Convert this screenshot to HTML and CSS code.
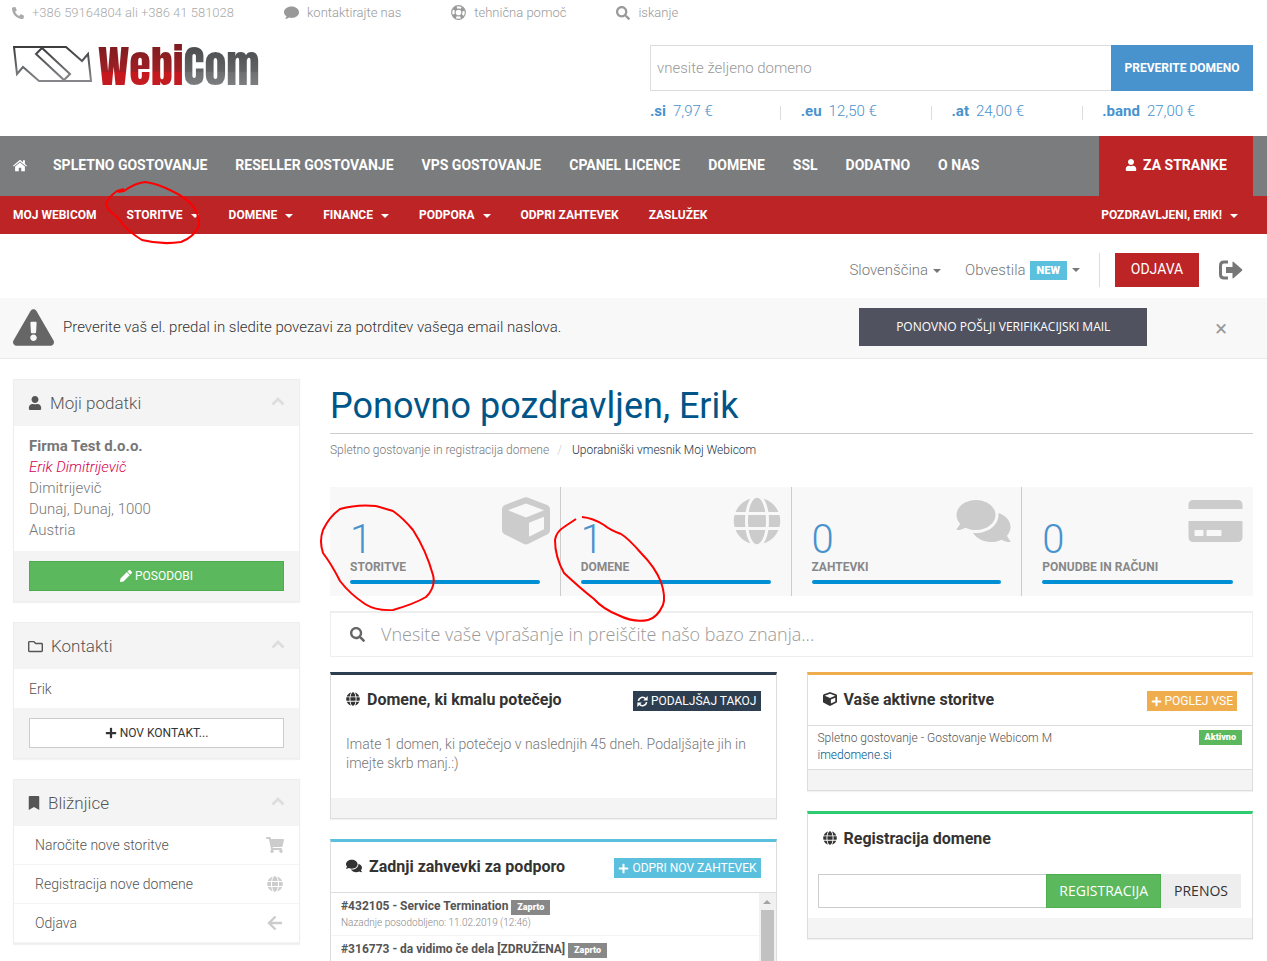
FILE: index.html
```html
<!DOCTYPE html>
<html lang="sl">
<head>
  <meta charset="UTF-8">
  <meta name="viewport" content="width=device-width, initial-scale=1.0">
  <title>Uporabniški vmesnik Moj Webicom</title>
  <link rel="stylesheet" href="styles.css">
</head>
<body>
  <!-- Icon sprite -->
  <svg class="sprite" aria-hidden="true">
    <symbol id="i-phone" viewBox="0 0 512 512"><path d="M18.600 25.300l104-24c11.300-2.600 22.900 3.300 27.500 13.900l48 112c4.200 9.800 1.400 21.300-6.900 28l-60.600 49.600c36 76.700 98.900 140.500 177.200 177.200l49.600-60.600c6.800-8.300 18.200-11.100 28-6.900l112 48c10.700 4.600 16.500 16.100 13.900 27.500l-24 104c-2.500 10.800-12.100 18.600-23.400 18.600C207.900 512.600 0 305.100 0 48.700 0 37.500 7.700 27.800 18.600 25.300z"/></symbol>
    <symbol id="i-comment" viewBox="0 0 512 512"><path d="M256 50C114.600 50 0 136 0 245c0 58 34 108 84 142-6 36-26 62-56 84 60 2 110-14 146-42 26 7 54 11 82 11 141.400 0 256-86 256-195S397.400 50 256 50z"/></symbol>
    <symbol id="i-ring" viewBox="0 0 16 16"><g fill="none" stroke="currentColor"><circle cx="8" cy="8" r="7.300" stroke-width="1.200"/><circle cx="8" cy="8" r="3.600" stroke-width="1.200"/><circle cx="8" cy="8" r="5.500" stroke-width="3.400" stroke-dasharray="4.320" stroke-dashoffset="2.160" transform="rotate(45 8 8)"/></g></symbol>
    <symbol id="i-search" viewBox="0 0 512 512"><path d="M505 442.700L405.300 343c-4.500-4.500-10.600-7-17-7H372c27.600-35.300 44-79.700 44-128C416 93.100 322.900 0 208 0S0 93.100 0 208s93.100 208 208 208c48.300 0 92.700-16.400 128-44v16.300c0 6.400 2.500 12.500 7 17l99.700 99.700c9.400 9.400 24.600 9.400 33.900 0l28.300-28.300c9.400-9.400 9.400-24.600.1-34zM208 336c-70.700 0-128-57.200-128-128 0-70.700 57.200-128 128-128 70.700 0 128 57.200 128 128 0 70.700-57.200 128-128 128z"/></symbol>
    <symbol id="i-home" viewBox="0 0 16 14"><path d="M8 1L0 7.800l.9 1L8 2.900l7.100 5.900.9-1-2.400-2V1.500h-2.200v2.400z"/><path d="M8 4.100L2.400 8.700V14h4.200v-4h2.800v4h4.200V8.700z"/></symbol>
    <symbol id="i-user" viewBox="0 0 448 512"><path d="M224 256c70.700 0 128-57.300 128-128S294.700 0 224 0 96 57.300 96 128s57.300 128 128 128zm89.600 32h-16.700c-22.200 10.200-46.900 16-72.900 16s-50.600-5.800-72.900-16h-16.700C60.200 288 0 348.200 0 422.400V464c0 26.500 21.500 48 48 48h352c26.500 0 48-21.500 48-48v-41.600c0-74.200-60.200-134.400-134.400-134.400z"/></symbol>
    <symbol id="i-signout" viewBox="0 0 24 20"><path d="M9 2H5Q1.500 2 1.500 5.500v9Q1.500 18 5 18h4" fill="none" stroke="currentColor" stroke-width="3"/><path d="M7 7h6.500V2.300Q13.500.8 14.700 1.900L23 9.300q.8.700 0 1.400l-8.300 7.400q-1.200 1.100-1.200-.4V13H7z"/></symbol>
    <symbol id="i-warning" viewBox="0 0 576 512"><path d="M569.517 440.013C587.975 472.007 564.806 512 527.940 512H48.054c-36.937 0-59.999-40.055-41.577-71.987L246.423 23.985c18.467-32.009 64.720-31.951 83.154 0l239.940 416.028zM288 354c-25.405 0-46 20.595-46 46s20.595 46 46 46 46-20.595 46-46-20.595-46-46-46zm-43.673-165.346l7.418 136c.347 6.364 5.609 11.346 11.982 11.346h48.546c6.373 0 11.635-4.982 11.982-11.346l7.418-136c.375-6.874-5.098-12.654-11.982-12.654h-63.383c-6.884 0-12.356 5.780-11.981 12.654z"/></symbol>
    <symbol id="i-chevron" viewBox="0 0 14 9"><path d="M1.500 7.500L7 2l5.500 5.500" fill="none" stroke="currentColor" stroke-width="2.800"/></symbol>
    <symbol id="i-pencil" viewBox="0 0 512 512"><path d="M497.900 142.100l-46.100 46.100c-4.700 4.700-12.300 4.700-17 0l-111-111c-4.700-4.700-4.700-12.300 0-17l46.100-46.100c18.700-18.700 49.100-18.700 67.900 0l60.100 60.100c18.800 18.700 18.800 49.100 0 67.900zM284.200 99.800L21.600 362.400.4 483.900c-2.900 16.400 11.400 30.600 27.800 27.800l121.500-21.300 262.600-262.600c4.700-4.700 4.700-12.300 0-17l-111-111c-4.800-4.700-12.400-4.700-17.100 0z"/></symbol>
    <symbol id="i-folder" viewBox="0 0 512 512"><path d="M464 128H272l-54.630-54.630c-6-6-14.140-9.370-22.630-9.370H48C21.490 64 0 85.490 0 112v288c0 26.510 21.490 48 48 48h416c26.510 0 48-21.490 48-48V176c0-26.510-21.490-48-48-48zm0 272H48V112h140.120l54.630 54.630c6 6 14.140 9.370 22.630 9.370H464v224z"/></symbol>
    <symbol id="i-plus" viewBox="0 0 448 512"><path d="M416 208H272V64c0-17.670-14.330-32-32-32h-32c-17.670 0-32 14.330-32 32v144H32c-17.670 0-32 14.330-32 32v32c0 17.670 14.330 32 32 32h144v144c0 17.670 14.330 32 32 32h32c17.670 0 32-14.330 32-32V304h144c17.670 0 32-14.330 32-32v-32c0-17.670-14.330-32-32-32z"/></symbol>
    <symbol id="i-bookmark" viewBox="0 0 384 512"><path d="M0 512V30C0 12 12 0 30 0h324c18 0 30 12 30 30v482L192 400 0 512z"/></symbol>
    <symbol id="i-cart" viewBox="0 0 576 512"><path d="M528.120 301.319l47.273-208C578.806 78.301 567.391 64 551.990 64H159.208l-9.166-44.810C147.758 8.021 137.930 0 126.529 0H24C10.745 0 0 10.745 0 24v16c0 13.255 10.745 24 24 24h69.883l70.248 343.435C147.325 417.100 136 435.222 136 456c0 30.928 25.072 56 56 56s56-25.072 56-56c0-15.674-6.447-29.835-16.824-40h209.647C430.447 426.165 424 440.326 424 456c0 30.928 25.072 56 56 56s56-25.072 56-56c0-22.172-12.888-41.332-31.579-50.405l5.517-24.276c3.413-15.018-8.002-29.319-23.403-29.319H218.117l-6.545-32h293.145c11.206 0 20.920-7.754 23.403-18.681z"/></symbol>
    <symbol id="i-globe" viewBox="0 0 496 512"><path d="M336.500 160C322 70.700 287.800 8 248 8s-74 62.700-88.500 152h177zM152 256c0 22.200 1.200 43.500 3.300 64h185.300c2.100-20.500 3.300-41.800 3.300-64s-1.200-43.500-3.300-64H155.300c-2.100 20.500-3.300 41.800-3.300 64zm324.700-96c-28.600-67.900-86.500-120.400-158-141.600 24.400 33.800 41.200 84.700 50 141.600h108zM177.200 18.400C105.800 39.600 47.800 92.100 19.300 160h108c8.700-56.900 25.500-107.800 49.900-141.600zM487.400 192H372.700c2.100 21 3.300 42.500 3.300 64s-1.200 43-3.300 64h114.600c5.500-20.500 8.600-41.800 8.600-64s-3.100-43.500-8.500-64zM120 256c0-21.500 1.200-43 3.300-64H8.600C3.200 212.500 0 233.800 0 256s3.200 43.500 8.600 64h114.600c-2-21-3.200-42.500-3.200-64zm39.500 96c14.500 89.300 48.700 152 88.500 152s74-62.700 88.500-152h-177zm159.300 141.600c71.400-21.200 129.400-73.700 158-141.600h-108c-8.800 56.900-25.600 107.800-50 141.600zM19.300 352c28.600 67.900 86.500 120.400 158 141.600-24.400-33.800-41.200-84.700-50-141.600h-108z"/></symbol>
    <symbol id="i-left" viewBox="0 0 16 16"><path d="M8.500 1.500L2 8l6.500 6.500M2.500 8H15" fill="none" stroke="currentColor" stroke-width="2.400"/></symbol>
    <symbol id="i-cube" viewBox="0 0 512 512"><path d="M239.100 6.300l-208 78c-18.700 7-31.100 25-31.100 45v225.100c0 18.200 10.300 34.800 26.500 42.900l208 104c13.500 6.800 29.400 6.800 42.900 0l208-104c16.300-8.100 26.500-24.800 26.500-42.900V129.300c0-20-12.400-37.900-31.100-44.900l-208-78C262 2.200 250 2.200 239.100 6.300zM256 68.400l192 72v1.100l-192 78-192-78v-1.100l192-72zm32 356V275.500l160-65v133.900l-160 80z"/></symbol>
    <symbol id="i-comments" viewBox="0 0 576 512"><path d="M416 192c0-88.400-93.100-160-208-160S0 103.600 0 192c0 34.300 14.100 65.900 38 92-13.400 30.200-35.500 54.200-35.800 54.500-2.200 2.300-2.800 5.700-1.500 8.700S4.800 352 8 352c36.600 0 66.900-12.300 88.700-25 32.200 15.700 70.300 25 111.300 25 114.900 0 208-71.600 208-160zm122 220c23.900-26 38-57.700 38-92 0-66.900-53.500-124.200-129.300-148.100.9 6.600 1.300 13.300 1.300 20.100 0 105.900-107.700 192-240 192-10.800 0-21.300-.8-31.700-1.900C207.800 439.600 281.800 480 368 480c41 0 79.100-9.200 111.300-25 21.800 12.700 52.100 25 88.700 25 3.200 0 6.100-1.900 7.300-4.800 1.300-2.900.7-6.300-1.500-8.700-.3-.3-22.400-24.200-35.800-54.500z"/></symbol>
    <symbol id="i-card" viewBox="0 0 576 512"><path d="M0 432c0 26.500 21.500 48 48 48h480c26.500 0 48-21.500 48-48V256H0v176zm192-68c0-6.600 5.400-12 12-12h136c6.600 0 12 5.400 12 12v40c0 6.600-5.400 12-12 12H204c-6.600 0-12-5.400-12-12v-40zm-128 0c0-6.600 5.400-12 12-12h72c6.600 0 12 5.400 12 12v40c0 6.600-5.400 12-12 12H76c-6.600 0-12-5.400-12-12v-40zM576 80v48H0V80c0-26.500 21.500-48 48-48h480c26.500 0 48 21.500 48 48z"/></symbol>
    <symbol id="i-sync" viewBox="0 0 16 16"><path d="M2 7a6 6 0 0 1 10.500-3M14 9a6 6 0 0 1-10.500 3" fill="none" stroke="currentColor" stroke-width="2.400"/><path d="M15.500 0v6.500H9zM.5 16V9.500H7z"/></symbol>
  </svg>

  <div class="page">
    <div class="container topbar">
      <span class="topbar-item phone"><svg class="icon icon-12"><use href="#i-phone"/></svg>+386 59164804 ali +386 41 581028</span>
      <a href="#" class="topbar-item"><svg class="icon icon-15"><use href="#i-comment"/></svg>kontaktirajte nas</a>
      <a href="#" class="topbar-item"><svg class="icon icon-15"><use href="#i-ring"/></svg>tehnična pomoč</a>
      <a href="#" class="topbar-item"><svg class="icon icon-14"><use href="#i-search"/></svg>iskanje</a>
    </div>

    <header class="container header">
      <a href="#" class="logo">
        <svg class="logo-mark" viewBox="0 0 80 38">
          <defs>
            <linearGradient id="steel" x1="0" y1="0" x2="0" y2="1">
              <stop offset="0" stop-color="#3c3d3f"/>
              <stop offset="1" stop-color="#85878a"/>
            </linearGradient>
          </defs>
          <g fill="none" stroke="url(#steel)" stroke-width="2">
            <path d="M1 2h52l16 14 6-7 3 27H26L10 22l-6 7z"/>
            <path d="M23 9l6-6 28 26-6 6z"/>
          </g>
        </svg>
        <span class="logo-text"><span class="logo-red">Webi</span><span class="logo-grey">Com</span></span>
      </a>
      <div class="domain-check">
        <form class="domain-form">
          <input type="text" placeholder="vnesite željeno domeno" aria-label="Domena">
          <button type="button">PREVERITE DOMENO</button>
        </form>
        <ul class="prices">
          <li><b>.si</b>7,97 €</li>
          <li><b>.eu</b>12,50 €</li>
          <li><b>.at</b>24,00 €</li>
          <li><b>.band</b>27,00 €</li>
        </ul>
      </div>
    </header>

    <nav class="main-nav">
      <div class="container nav-row">
        <a href="#" class="home" aria-label="Domov"><svg class="icon icon-14"><use href="#i-home"/></svg></a>
        <a href="#">SPLETNO GOSTOVANJE</a>
        <a href="#">RESELLER GOSTOVANJE</a>
        <a href="#">VPS GOSTOVANJE</a>
        <a href="#">CPANEL LICENCE</a>
        <a href="#">DOMENE</a>
        <a href="#">SSL</a>
        <a href="#">DODATNO</a>
        <a href="#">O NAS</a>
        <a href="#" class="clients"><svg class="icon icon-12"><use href="#i-user"/></svg>ZA STRANKE</a>
      </div>
    </nav>

    <nav class="sub-nav">
      <div class="container sub-row">
        <a href="#">MOJ WEBICOM</a>
        <a href="#">STORITVE<i class="caret"></i></a>
        <a href="#">DOMENE<i class="caret"></i></a>
        <a href="#">FINANCE<i class="caret"></i></a>
        <a href="#">PODPORA<i class="caret"></i></a>
        <a href="#">ODPRI ZAHTEVEK</a>
        <a href="#">ZASLUŽEK</a>
        <a href="#" class="account">POZDRAVLJENI, ERIK!<i class="caret"></i></a>
      </div>
    </nav>

    <div class="container toolbar">
      <a href="#">Slovenščina<i class="caret"></i></a>
      <a href="#" class="notices">Obvestila<span class="badge-new">NEW</span><i class="caret"></i></a>
      <div class="session">
        <button type="button" class="btn-logout">ODJAVA</button>
        <a href="#" aria-label="Odjava"><svg class="icon signout"><use href="#i-signout"/></svg></a>
      </div>
    </div>

    <div class="verify">
      <div class="container verify-row">
        <svg class="icon verify-icon"><use href="#i-warning"/></svg>
        <p>Preverite vaš el. predal in sledite povezavi za potrditev vašega email naslova.</p>
        <button type="button" class="btn-verify">PONOVNO POŠLJI VERIFIKACIJSKI MAIL</button>
        <button type="button" class="close" aria-label="Zapri">×</button>
      </div>
    </div>

    <div class="container layout">
      <aside class="sidebar">
        <section class="side-panel">
          <h3><svg class="icon icon-14"><use href="#i-user"/></svg>Moji podatki<svg class="icon chevron"><use href="#i-chevron"/></svg></h3>
          <div class="details">
            <strong>Firma Test d.o.o.</strong><br>
            <em>Erik Dimitrijevič</em><br>
            Dimitrijevič<br>
            Dunaj, Dunaj, 1000<br>
            Austria
          </div>
          <div class="side-footer">
            <button type="button" class="btn-side green"><svg class="icon icon-12"><use href="#i-pencil"/></svg>POSODOBI</button>
          </div>
        </section>

        <section class="side-panel">
          <h3><svg class="icon icon-15"><use href="#i-folder"/></svg>Kontakti<svg class="icon chevron"><use href="#i-chevron"/></svg></h3>
          <a href="#" class="contact">Erik</a>
          <div class="side-footer">
            <button type="button" class="btn-side"><svg class="icon icon-12"><use href="#i-plus"/></svg>NOV KONTAKT...</button>
          </div>
        </section>

        <section class="side-panel">
          <h3><svg class="icon bookmark"><use href="#i-bookmark"/></svg>Bližnjice<svg class="icon chevron"><use href="#i-chevron"/></svg></h3>
          <a href="#" class="shortcut">Naročite nove storitve<svg class="icon icon-18"><use href="#i-cart"/></svg></a>
          <a href="#" class="shortcut">Registracija nove domene<svg class="icon icon-18"><use href="#i-globe"/></svg></a>
          <a href="#" class="shortcut">Odjava<svg class="icon icon-18"><use href="#i-left"/></svg></a>
        </section>
      </aside>

      <main class="content">
        <h1>Ponovno pozdravljen, Erik</h1>
        <div class="breadcrumb">
          <a href="#">Spletno gostovanje in registracija domene</a><span>/</span><a href="#" class="current">Uporabniški vmesnik Moj Webicom</a>
        </div>

        <div class="tiles">
          <a href="#" class="tile"><svg class="icon tile-icon cube"><use href="#i-cube"/></svg><span class="stat">1</span><span class="stat-title">STORITVE</span><span class="bar"></span></a>
          <a href="#" class="tile"><svg class="icon tile-icon cube"><use href="#i-globe"/></svg><span class="stat">1</span><span class="stat-title">DOMENE</span><span class="bar"></span></a>
          <a href="#" class="tile"><svg class="icon tile-icon"><use href="#i-comments"/></svg><span class="stat">0</span><span class="stat-title">ZAHTEVKI</span><span class="bar"></span></a>
          <a href="#" class="tile"><svg class="icon tile-icon"><use href="#i-card"/></svg><span class="stat">0</span><span class="stat-title">PONUDBE IN RAČUNI</span><span class="bar"></span></a>
        </div>

        <form class="kb-search">
          <svg class="icon icon-15"><use href="#i-search"/></svg>
          <input type="text" placeholder="Vnesite vaše vprašanje in preiščite našo bazo znanja..." aria-label="Baza znanja">
        </form>

        <div class="panels">
          <div class="panel-col">
            <section class="panel navy">
              <div class="panel-head">
                <h3><svg class="icon icon-14"><use href="#i-globe"/></svg>Domene, ki kmalu potečejo</h3>
                <button type="button" class="btn-xs"><svg class="icon icon-11"><use href="#i-sync"/></svg>PODALJŠAJ TAKOJ</button>
              </div>
              <p class="panel-text">Imate 1 domen, ki potečejo v naslednjih 45 dneh. Podaljšajte jih in imejte skrb manj.:)</p>
              <div class="panel-footer"></div>
            </section>

            <section class="panel sky">
              <div class="panel-head">
                <h3><svg class="icon icon-16"><use href="#i-comments"/></svg>Zadnji zahvevki za podporo</h3>
                <button type="button" class="btn-xs"><svg class="icon icon-11"><use href="#i-plus"/></svg>ODPRI NOV ZAHTEVEK</button>
              </div>
              <div class="tickets">
                <div class="ticket-list">
                  <a href="#" class="ticket"><span class="subject">#432105 - Service Termination <span class="closed">Zaprto</span></span><small>Nazadnje posodobljeno: 11.02.2019 (12:46)</small></a>
                  <a href="#" class="ticket"><span class="subject">#316773 - da vidimo če dela [ZDRUŽENA] <span class="closed">Zaprto</span></span></a>
                </div>
                <div class="scrollbar"><i class="scroll-up"></i><i class="scroll-thumb"></i></div>
              </div>
            </section>
          </div>

          <div class="panel-col">
            <section class="panel orange">
              <div class="panel-head">
                <h3><svg class="icon icon-14"><use href="#i-cube"/></svg>Vaše aktivne storitve</h3>
                <button type="button" class="btn-xs"><svg class="icon icon-11"><use href="#i-plus"/></svg>POGLEJ VSE</button>
              </div>
              <div class="service">
                <div>Spletno gostovanje - Gostovanje Webicom M<br><a href="#">imedomene.si</a></div>
                <span class="active">Aktivno</span>
              </div>
              <div class="panel-footer"></div>
            </section>

            <section class="panel green-top">
              <div class="panel-head">
                <h3><svg class="icon icon-14"><use href="#i-globe"/></svg>Registracija domene</h3>
              </div>
              <form class="register">
                <input type="text" aria-label="Ime domene">
                <button type="button" class="btn-register">REGISTRACIJA</button>
                <button type="button" class="btn-transfer">PRENOS</button>
              </form>
              <div class="panel-footer"></div>
            </section>
          </div>
        </div>
      </main>
    </div>

    <!-- Red pen marks -->
    <svg class="marks" width="700" height="640" viewBox="0 0 700 640" aria-hidden="true">
      <path d="M118 192L124 191Q135 183 145 182Q156 183 172 191Q189 199 195 209Q200 219 199 226Q194 237 181 242Q162 245 142 240Q127 231 118 218Q107 209 106 205Q107 198 117 191L124 189"/>
      <path d="M376 506Q357 504 340 509Q329 517 323 530Q319 541 323 553Q332 565 340 581Q350 594 365 604Q376 611 393 610Q414 604 426 597Q436 587 433 575Q426 550 413 530Q403 518 393 511Q386 509 376 506"/>
      <path d="M582 517Q593 518 604 525Q610 530 621 534Q628 538 641 553Q655 567 661 582Q666 597 663 605Q657 618 648 620Q634 623 618 615Q603 609 594 599Q580 588 564 573Q555 557 555 540Q556 532 564 527L576 519"/>
    </svg>
  </div>
</body>
</html>
```

FILE: styles.css
```css
* {
  box-sizing: border-box;
}

body {
  margin: 0;
  font-family: Roboto, "Open Sans", sans-serif;
  font-size: 14px;
  font-weight: 300;
  color: #666;
  background: #fff;
}

a {
  color: inherit;
  text-decoration: none;
}

b,
strong {
  font-weight: 700;
}

button,
input {
  font-family: inherit;
  border: 0;
  border-radius: 0;
  margin: 0;
}

h1, h3, p, ul {
  margin: 0;
  padding: 0;
}

.sprite {
  display: none;
}

.page {
  position: relative;
  height: 100vh;
  overflow: hidden;
}

.container {
  padding: 0 14px 0 13px;
}

.icon {
  fill: currentColor;
  flex: none;
  width: 14px;
  height: 14px;
}

.icon-11 { width: 11px; height: 11px; }
.icon-12 { width: 12px; height: 12px; }
.icon-15 { width: 15px; height: 15px; }
.icon-16 { width: 16px; height: 16px; }
.icon-18 { width: 18px; height: 16px; }

.caret {
  display: inline-block;
  border: 4px solid transparent;
  border-top-color: currentColor;
  border-bottom: 0;
  vertical-align: middle;
}

/* Top bar */
.topbar {
  display: flex;
  gap: 50px;
  height: 25px;
  padding-left: 12px;
  font-size: 13px;
  color: #999;
}

.topbar-item {
  display: flex;
  align-items: center;
  gap: 8px;
}

.phone {
  color: #aaa;
}

/* Header */
.header {
  display: flex;
  justify-content: space-between;
  align-items: flex-start;
  padding-top: 20px;
  height: 111px;
}

.logo {
  display: flex;
  gap: 5px;
}

.logo-mark {
  width: 80px;
  height: 38px;
}

.logo-text {
  font-family: Impact, Anton, "Roboto Condensed", Roboto, sans-serif;
  font-size: 44px;
  font-weight: 400;
  line-height: 42px;
}

.logo-red,
.logo-grey {
  color: transparent;
  background: linear-gradient(#6e1a1e, #a02025 58%, #c8171d 60%, #b82226);
  -webkit-background-clip: text;
  background-clip: text;
}

.logo-grey {
  background-image: linear-gradient(#3e3f41, #636466 58%, #6e7072 60%, #8a8c8e);
}

.domain-check {
  width: 603px;
}

.domain-form {
  display: flex;
  height: 46px;
}

.domain-form input {
  flex: 1;
  border: 1px solid #ddd;
  border-right: 0;
  padding: 0 6px;
  font-size: 15px;
  font-weight: 300;
}

input::placeholder {
  color: #999;
  opacity: 1;
}

.domain-form button {
  width: 142px;
  padding: 0;
  color: #fff;
  background: #4892ce;
  font-size: 12px;
  font-weight: 700;
}

.prices {
  display: grid;
  grid-template-columns: repeat(4, 1fr);
  list-style: none;
  padding-top: 10px;
  font-size: 15px;
  line-height: 20px;
  color: #4892ce;
}

.prices li {
  background: linear-gradient(#ddd, #ddd) no-repeat 130px 5px / 1px 14px;
}

.prices li:last-child {
  background: none;
}

.prices b {
  margin-right: 7px;
}

/* Navigation */
.main-nav {
  background: #7b7c7e;
  color: #fff;
  font-size: 14px;
  font-weight: 700;
}

.nav-row {
  display: flex;
  align-items: center;
  gap: 28px;
  height: 60px;
}

.nav-row a {
  padding-bottom: 2px;
}

.home {
  display: flex;
  width: 12px;
}

.clients {
  display: flex;
  align-items: center;
  justify-content: center;
  gap: 6px;
  width: 154px;
  height: 60px;
  margin-left: auto;
  background: #bd2426;
}

.sub-nav {
  background: #bd2426;
  color: #fff;
  font-size: 12px;
  font-weight: 700;
}

.sub-row {
  display: flex;
  align-items: center;
  gap: 30px;
  height: 38px;
}

.sub-row .caret {
  margin-left: 8px;
}

.account {
  margin-left: auto;
  margin-right: 15px;
}

/* Toolbar */
.toolbar {
  display: flex;
  align-items: center;
  justify-content: flex-end;
  height: 64px;
  padding-top: 8px;
  padding-right: 24px;
  font-size: 15px;
  color: #777;
}

.toolbar .caret {
  margin-left: 5px;
}

.notices {
  display: flex;
  align-items: center;
  margin: 0 19px 0 24px;
}

.badge-new {
  margin-left: 4px;
  padding: 0 7px;
  background: #5bc0de;
  color: #fff;
  font-size: 11px;
  font-weight: 900;
  line-height: 19px;
}

.session {
  display: flex;
  align-items: center;
  gap: 20px;
  border-left: 1px solid #ddd;
  padding-left: 15px;
}

.btn-logout {
  width: 84px;
  height: 34px;
  padding: 0 0 2px;
  color: #fff;
  background: #bd2426;
  font-size: 14px;
}

.signout {
  display: block;
  width: 24px;
  height: 20px;
}

/* E-mail verification banner */
.verify {
  background: #f8f8f8;
  border-bottom: 1px solid #eaeaea;
}

.verify-row {
  display: flex;
  align-items: center;
  height: 60px;
  padding-bottom: 2px;
}

.verify-icon {
  width: 41px;
  height: 37px;
}

.verify p {
  flex: 1;
  padding-left: 9px;
  font-size: 15px;
  color: #333;
}

.btn-verify {
  width: 288px;
  height: 38px;
  padding-bottom: 3px;
  color: #fff;
  background: #50525f;
  font-family: "Open Sans", sans-serif;
  font-size: 12px;
}

.close {
  margin: 4px 26px 0 68px;
  padding: 0;
  background: none;
  color: #999;
  font-size: 22px;
  line-height: 20px;
}

/* Layout */
.layout {
  display: flex;
  gap: 30px;
  padding-top: 20px;
}

.sidebar {
  flex: 0 0 287px;
}

.content {
  flex: 1;
  min-width: 0;
}

/* Sidebar */
.side-panel {
  margin-bottom: 20px;
  border: 1px solid #eee;
  box-shadow: 0 1px 1px rgba(0, 0, 0, 0.05);
}

.side-panel h3 {
  display: flex;
  align-items: center;
  gap: 8px;
  height: 46px;
  padding: 0 14px;
  background: #f4f4f4;
  color: #555;
  font-size: 17px;
  font-weight: 300;
}

.bookmark {
  width: 12px;
}

.chevron {
  width: 14px;
  height: 9px;
  margin: 0 0 4px auto;
  color: #ddd;
}

.details {
  padding: 10px 15px;
  font-size: 15px;
  line-height: 21px;
  color: #777;
}

.details em {
  color: #d6004d;
}

.side-footer {
  padding: 10px 15px;
  background: #f4f4f4;
}

.btn-side {
  display: flex;
  align-items: center;
  justify-content: center;
  gap: 3px;
  width: 100%;
  height: 30px;
  border: 1px solid #ccc;
  background: #fff;
  color: #333;
  font-size: 12px;
}

.btn-side.green {
  border-color: #4cae4c;
  background: #5cb85c;
  color: #fff;
}

.contact,
.shortcut {
  display: flex;
  align-items: center;
  justify-content: space-between;
  height: 39px;
  padding: 0 15px;
  color: #555;
}

.shortcut {
  padding-left: 21px;
  border-bottom: 1px solid #f4f4f4;
}

.shortcut .icon {
  color: #ccc;
}

/* Main column */
h1 {
  padding: 5px 0 4px;
  border-bottom: 1px solid #ccc;
  color: #058;
  font-size: 36px;
  font-weight: 400;
  line-height: 45px;
}

.breadcrumb {
  display: flex;
  padding: 8px 0 29px;
  font-size: 12px;
  line-height: 16px;
  color: #777;
}

.breadcrumb span {
  padding: 0 10px 0 8px;
  color: #ccc;
}

.breadcrumb .current {
  color: #234;
}

.tiles {
  display: grid;
  grid-template-columns: repeat(4, 1fr);
  background: #f8f8f8;
}

.tile {
  position: relative;
  display: flex;
  flex-direction: column;
  height: 109px;
  padding: 33px 20px 12px;
  border-right: 1px solid #ccc;
}

.tile:last-child {
  border-right: 0;
}

.tile-icon {
  position: absolute;
  top: 10px;
  right: 10px;
  width: 55px;
  height: 48px;
  color: #ccc;
}

.tile-icon.cube {
  width: 48px;
}

.stat {
  color: #4892ce;
  font-size: 40px;
  line-height: 39px;
}

.stat-title {
  color: #888;
  font-size: 12px;
  font-weight: 700;
  line-height: 16px;
}

.bar {
  height: 4px;
  margin-top: 5px;
  border-radius: 2px;
  background: #008fd5;
}

.kb-search {
  display: flex;
  align-items: center;
  gap: 16px;
  height: 46px;
  margin: 15px 0;
  padding: 0 19px;
  border: 1px solid #eee;
  border-top-width: 2px;
}

.kb-search input {
  flex: 1;
  padding: 0 0 2px;
  font-family: "Open Sans", sans-serif;
  font-size: 18px;
  font-weight: 300;
}

.panels {
  display: grid;
  grid-template-columns: 1fr 1fr;
  gap: 30px;
}

.panel {
  margin-bottom: 20px;
  border: 1px solid #ddd;
  border-top: 3px solid var(--accent);
  box-shadow: 0 1px 1px rgba(0, 0, 0, 0.05);
}

.navy { --accent: #2c3e50; }
.sky { --accent: #5bc0de; }
.orange { --accent: #f0ad4e; }
.green-top { --accent: #2ecc71; }

.panel-head {
  display: flex;
  align-items: center;
  justify-content: space-between;
  height: 50px;
  padding: 0 15px;
}

.panel h3 {
  display: flex;
  align-items: center;
  gap: 7px;
  padding-bottom: 2px;
  color: #333;
  font-size: 16px;
  font-weight: 700;
}

.btn-xs {
  display: flex;
  align-items: center;
  gap: 3px;
  height: 20px;
  margin-top: 2px;
  padding: 0 4px;
  color: #fff;
  background: var(--accent);
  font-size: 12px;
}

.panel-text {
  padding: 10px 15px 25px;
  color: #777;
  font-size: 14px;
  line-height: 19px;
}

.panel-footer {
  height: 20px;
  background: #f4f4f4;
}

.tickets {
  display: flex;
  height: 200px;
  border-top: 1px solid #ddd;
}

.ticket-list {
  flex: 1;
}

.ticket {
  display: block;
  padding: 4px 10px 5px;
  border-bottom: 1px solid #f4f4f4;
}

.subject {
  display: block;
  color: #555;
  font-size: 12px;
  font-weight: 700;
  line-height: 18px;
}

.closed,
.active {
  display: inline-block;
  padding: 0 6px;
  background: #888;
  color: #fff;
  font-size: 9px;
  font-weight: 900;
  line-height: 15px;
}

.ticket small {
  display: block;
  color: #888;
  font-size: 10px;
  line-height: 15px;
}

.scrollbar {
  display: flex;
  flex-direction: column;
  align-items: center;
  width: 17px;
  background: #f1f1f1;
}

.scroll-up {
  margin: 7px 0 6px;
  border: 4px solid transparent;
  border-top: 0;
  border-bottom-color: #a3a3a3;
}

.scroll-thumb {
  flex: 1;
  width: 13px;
  background: #c1c1c1;
}

.service {
  display: flex;
  align-items: flex-start;
  justify-content: space-between;
  padding: 4px 10px 5px;
  border: solid #ddd;
  border-width: 1px 0;
  color: #555;
  font-size: 12px;
  line-height: 17px;
}

.service a {
  color: #058;
}

.active {
  background: #5cb85c;
}

.register {
  display: flex;
  padding: 10px 11px 10px 10px;
}

.register input {
  flex: 1;
  min-width: 0;
  border: 1px solid #ccc;
  border-right: 0;
}

.register button {
  height: 34px;
  padding: 0 13px 2px;
  font-family: "Open Sans", sans-serif;
  font-size: 14px;
}

.register .btn-register {
  padding: 0 12px 2px;
  border: 1px solid #4cae4c;
  background: #5cb85c;
  color: #fff;
}

.btn-transfer {
  background: #eee;
  color: #333;
}

.marks {
  position: absolute;
  top: 0;
  left: 0;
  fill: none;
  stroke: #f00;
  stroke-width: 2;
  pointer-events: none;
}
```
